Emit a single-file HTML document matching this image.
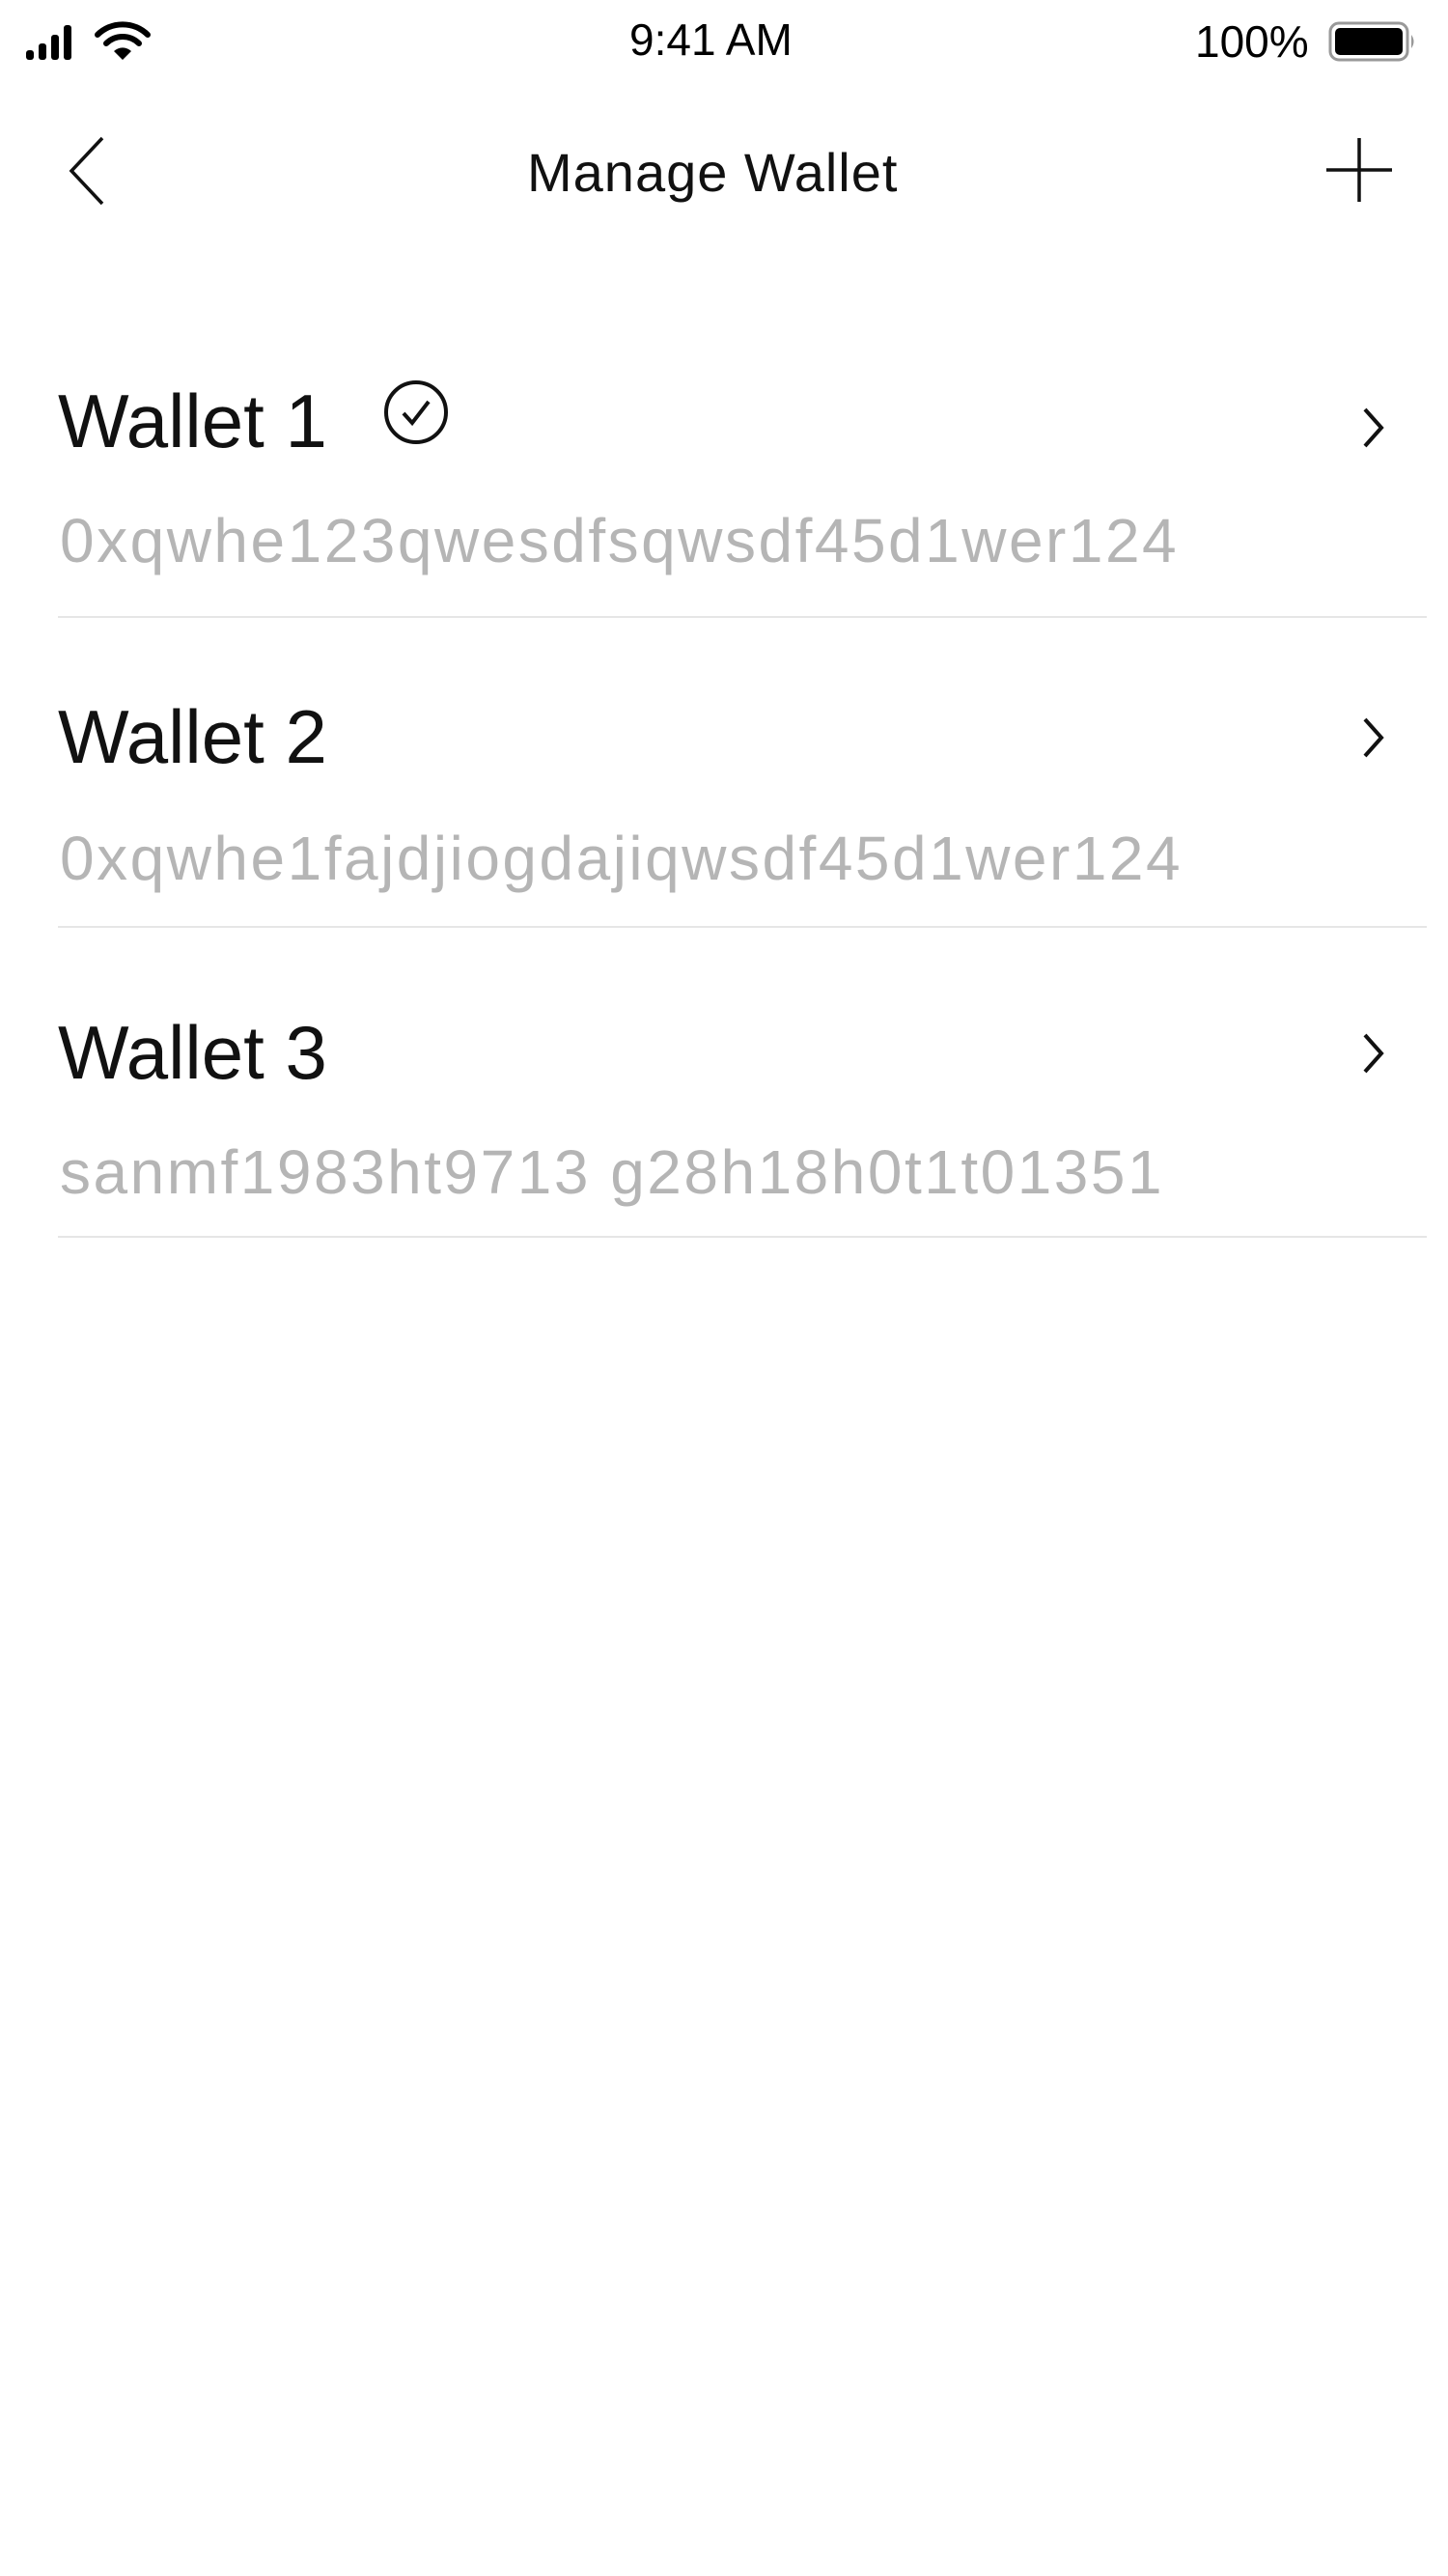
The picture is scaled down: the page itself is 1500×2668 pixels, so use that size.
<!DOCTYPE html>
<html><head><meta charset="utf-8"><style>
body{margin:0;width:1500px;height:2668px;background:#fff;position:relative;overflow:hidden;font-family:"Liberation Sans",sans-serif;}
.t{position:absolute;line-height:1;white-space:nowrap;}
.w{font-size:78px;color:#111;left:60px;}
.a{font-size:64px;color:#b5b5b5;left:62px;letter-spacing:2.5px;}
.sep{position:absolute;left:60px;right:22px;height:2px;background:#e6e6e6;}
svg{position:absolute;}
</style></head><body>
<div class="t" style="left:652px;top:18px;font-size:46px;color:#000;">9:41 AM</div>
<div class="t" style="left:1238px;top:20px;font-size:46px;color:#000;">100%</div>
<svg style="left:25px;top:24px" width="60" height="40" viewBox="0 0 60 40">
<rect x="2" y="28" width="8" height="10" rx="3"/><rect x="15" y="21" width="8" height="17" rx="3"/><rect x="28" y="12" width="8" height="26" rx="3"/><rect x="41" y="2" width="8" height="36" rx="3"/></svg>
<svg style="left:98px;top:22px" width="58" height="42" viewBox="0 0 58 42">
<path d="M3 14 A37 37 0 0 1 55 14" fill="none" stroke="#000" stroke-width="6" stroke-linecap="round"/>
<path d="M12 23 A24 24 0 0 1 46 23" fill="none" stroke="#000" stroke-width="6" stroke-linecap="round"/>
<path d="M20 31 L29 40 L38 31 A13 13 0 0 0 20 31Z"/></svg>
<svg style="left:1376px;top:22px" width="92" height="42" viewBox="0 0 92 42">
<rect x="2" y="2" width="80" height="38" rx="9" fill="none" stroke="#999" stroke-width="3"/>
<rect x="7" y="7" width="70" height="28" rx="5"/>
<path d="M86 14 Q91 21 86 28Z" fill="#999"/></svg>
<svg style="left:66px;top:140px" width="46" height="74" viewBox="0 0 46 74"><path d="M40 3 L8 37 L40 71" fill="none" stroke="#111" stroke-width="3.5"/></svg>
<div class="t" style="left:546px;top:151px;font-size:56px;color:#111;letter-spacing:1px;">Manage Wallet</div>
<svg style="left:1374px;top:143px" width="68" height="66" viewBox="0 0 68 66"><path d="M34 0V66M0 33H68" stroke="#111" stroke-width="3.5"/></svg>

<div class="t w" style="top:397px">Wallet 1</div>
<svg style="left:396px;top:392px" width="70" height="70" viewBox="0 0 70 70"><circle cx="35" cy="35" r="31" fill="none" stroke="#111" stroke-width="4"/><path d="M22 36 L31 46 L48 24" fill="none" stroke="#111" stroke-width="4"/></svg>
<div class="t a" style="top:528px">0xqwhe123qwesdfsqwsdf45d1wer124</div>
<div class="sep" style="top:638px"></div>

<div class="t w" style="top:724px">Wallet 2</div>
<div class="t a" style="top:857px">0xqwhe1fajdjiogdajiqwsdf45d1wer124</div>
<div class="sep" style="top:959px"></div>

<div class="t w" style="top:1051px">Wallet 3</div>
<div class="t a" style="top:1182px">sanmf1983ht9713 g28h18h0t1t01351</div>
<div class="sep" style="top:1280px"></div>

<svg style="left:1405px;top:420px" width="36" height="46" viewBox="0 0 36 46"><path d="M9 4 L26 23 L9 42" fill="none" stroke="#111" stroke-width="4"/></svg>
<svg style="left:1405px;top:741px" width="36" height="46" viewBox="0 0 36 46"><path d="M9 4 L26 23 L9 42" fill="none" stroke="#111" stroke-width="4"/></svg>
<svg style="left:1405px;top:1068px" width="36" height="46" viewBox="0 0 36 46"><path d="M9 4 L26 23 L9 42" fill="none" stroke="#111" stroke-width="4"/></svg>
</body></html>
